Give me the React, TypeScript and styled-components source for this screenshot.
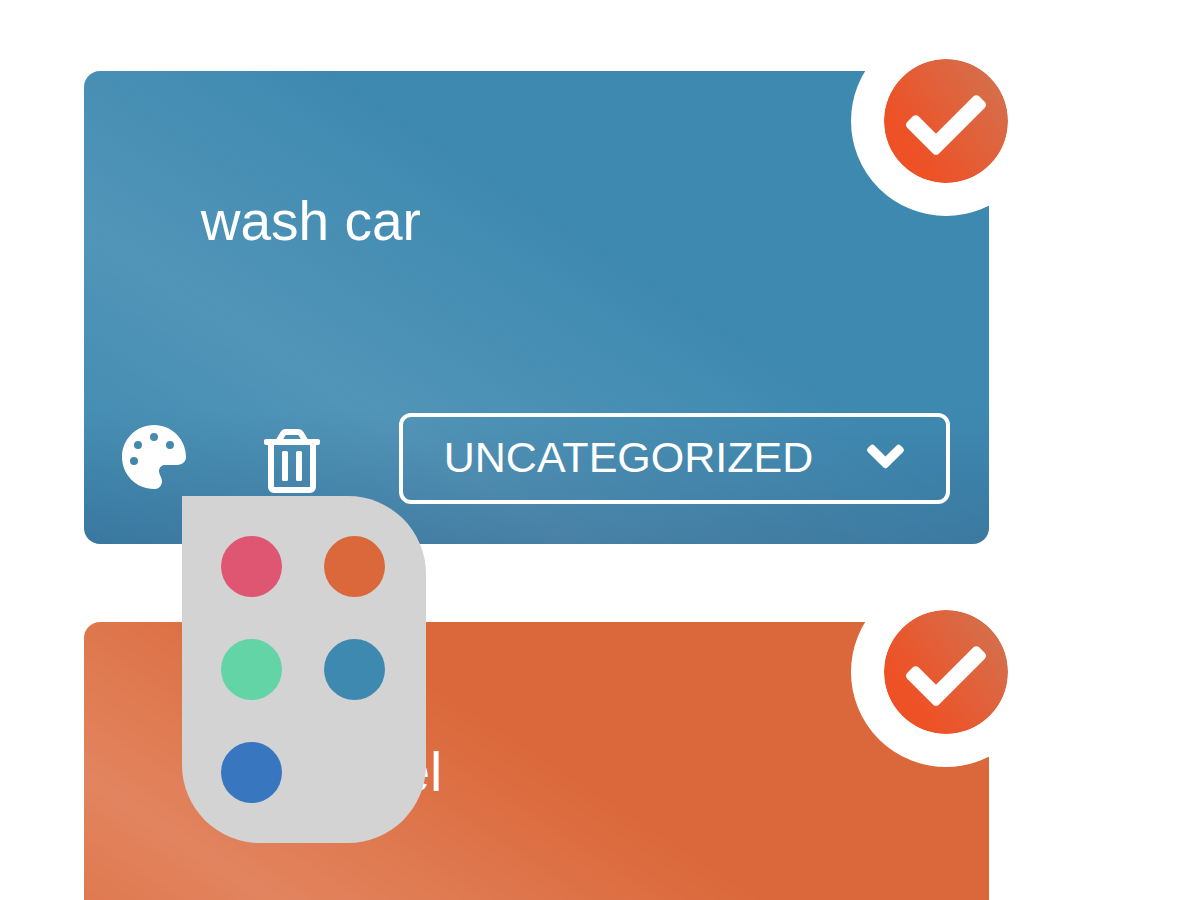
import React, { useState } from "react";
import styled, { createGlobalStyle } from "styled-components";
import { FaAngleDown, FaCheck, FaRegTrashAlt } from "react-icons/fa";
import { FaPalette } from "react-icons/fa6";

const GlobalStyle = createGlobalStyle`
  *, *::before, *::after {
    box-sizing: border-box;
  }
  body {
    margin: 0;
    background: #fff;
    color: #fff;
    font-family: "Liberation Sans", Helvetica, Arial, sans-serif;
  }
`;

const Viewport = styled.main`
  height: 100vh;
  overflow: hidden;
`;

const TodoList = styled.ul`
  display: flex;
  flex-direction: column;
  gap: 78px;
  margin: 0;
  padding: 71px 17.3% 71px 7%;
  list-style: none;
`;

const Card = styled.li<{ $color: string; $shine: number }>`
  position: relative;
  display: flex;
  flex-direction: column;
  justify-content: space-between;
  min-height: 473px;
  flex-shrink: 0;
  padding: 118px 39px 40px 38px;
  border-radius: 16px;
  background:
    linear-gradient(to top, rgba(48, 80, 120, 0.3), rgba(48, 80, 120, 0) 28%),
    linear-gradient(
      33deg,
      rgba(255, 255, 255, 0),
      rgba(255, 255, 255, ${(p) => p.$shine}) 30%,
      rgba(255, 255, 255, 0) 60%
    ),
    ${(p) => p.$color};
`;

const Title = styled.h2`
  margin: 0;
  padding: 0 79px;
  font-size: 55px;
  font-weight: 400;
  line-height: 64px;
`;

const Actions = styled.div`
  display: flex;
  align-items: center;
`;

const IconButton = styled.button`
  display: flex;
  padding: 0;
  border: 0;
  background: none;
  color: inherit;
  cursor: pointer;
`;

const PaletteAnchor = styled.div`
  position: relative;
  display: flex;
  margin-right: 74px;
  margin-bottom: 4px;
`;

const Swatches = styled.div`
  position: absolute;
  z-index: 2;
  top: 71px;
  left: 60px;
  display: grid;
  grid-template-columns: repeat(2, 61px);
  gap: 42px;
  padding: 40px 41px 40px 39px;
  border-radius: 0 78px 78px 78px;
  background: #d3d3d3;
`;

const Swatch = styled.button<{ $color: string }>`
  width: 61px;
  height: 61px;
  padding: 0;
  border: 0;
  border-radius: 50%;
  background: ${(p) => p.$color};
  cursor: pointer;
`;

const TrashButton = styled(IconButton)`
  padding-top: 4px;
`;

const SelectBox = styled.div`
  position: relative;
  flex: 1;
  margin-left: 75px;

  svg {
    position: absolute;
    top: 14px;
    right: 35px;
    pointer-events: none;
  }
`;

const Select = styled.select`
  display: block;
  width: 100%;
  height: 91px;
  padding: 0 110px 3px 41px;
  border: 4px solid #fff;
  border-radius: 12px;
  appearance: none;
  background: transparent;
  color: inherit;
  font-family: inherit;
  font-size: 43px;
  text-transform: uppercase;

  option {
    color: #222;
  }
`;

const DoneButton = styled.button`
  position: absolute;
  top: -45px;
  right: -52px;
  display: flex;
  align-items: center;
  justify-content: center;
  width: 190px;
  height: 190px;
  padding: 8px 0 0;
  border: 33px solid #fff;
  border-radius: 50%;
  background: linear-gradient(55deg, #ee5126 25%, #d4704d 90%) padding-box, #fff;
  color: #fff;
  cursor: pointer;
`;

const colors = [
  { name: "Pink", value: "#de5671" },
  { name: "Orange", value: "#db683a" },
  { name: "Green", value: "#62d4a6" },
  { name: "Teal", value: "#3e89b0" },
  { name: "Blue", value: "#3876bf" },
];

const todos = [
  { title: "wash car", color: "#3e89b0", shine: 0.1, picking: true },
  { title: "get gravel", color: "#db683a", shine: 0.19, picking: false },
];

type Todo = (typeof todos)[number];

function TodoCard({ todo }: { todo: Todo }) {
  const [color, setColor] = useState(todo.color);
  const [picking, setPicking] = useState(todo.picking);

  return (
    <Card $color={color} $shine={todo.shine}>
      <Title>{todo.title}</Title>
      <DoneButton aria-label={`Complete ${todo.title}`}>
        <FaCheck size={80} />
      </DoneButton>
      <Actions>
        <PaletteAnchor>
          <IconButton aria-label="Choose color" onClick={() => setPicking(!picking)}>
            <FaPalette size={64} />
          </IconButton>
          {picking && (
            <Swatches>
              {colors.map((c) => (
                <Swatch
                  key={c.name}
                  $color={c.value}
                  aria-label={c.name}
                  onClick={() => setColor(c.value)}
                />
              ))}
            </Swatches>
          )}
        </PaletteAnchor>
        <TrashButton aria-label="Delete">
          <FaRegTrashAlt size={64} />
        </TrashButton>
        <SelectBox>
          <Select aria-label="Category" defaultValue="uncategorized">
            <option value="uncategorized">Uncategorized</option>
          </Select>
          <FaAngleDown size={59} />
        </SelectBox>
      </Actions>
    </Card>
  );
}

export default function App() {
  return (
    <Viewport>
      <GlobalStyle />
      <TodoList>
        {todos.map((todo) => (
          <TodoCard key={todo.title} todo={todo} />
        ))}
      </TodoList>
    </Viewport>
  );
}
